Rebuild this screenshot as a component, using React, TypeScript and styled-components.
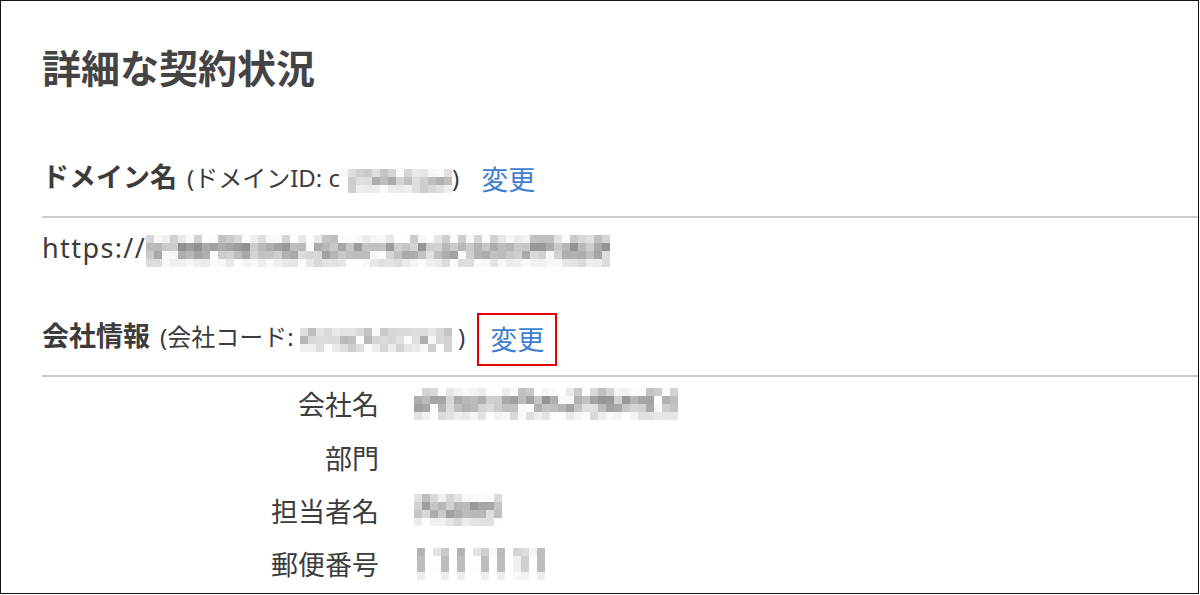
import * as React from 'react';
import styled, { createGlobalStyle } from 'styled-components';

const GlobalStyle = createGlobalStyle`
  html, body {
    margin: 0;
    padding: 0;
    background: #fff;
  }
  body {
    font-family: 'Noto Sans', 'Noto Sans CJK JP', sans-serif;
    color: #3c3c3c;
  }
`;

const Frame = styled.div`
  box-sizing: border-box;
  width: 1199px;
  height: 594px;
  border: 1px solid #111;
  padding-left: 41px;
  overflow: hidden;
`;

const Heading = styled.h1`
  margin: 0;
  padding-top: 43px;
  font-size: 39px;
  line-height: 48px;
  font-weight: 700;
  color: #444;
`;

const Section = styled.section<{ $gap: number }>`
  margin-top: ${(p) => p.$gap}px;
`;

const TitleRow = styled.div`
  line-height: 40px;
  padding-bottom: 15px;
  border-bottom: 2px solid #cdcdcd;
  white-space: nowrap;
`;

const Title = styled.span`
  font-size: 27px;
  font-weight: 700;
  color: #3c3c3c;
`;

const Sub = styled.span`
  margin-left: 10px;
  font-size: 24px;
  color: #3c3c3c;
`;

const ChangeLink = styled.a<{ $marked?: boolean }>`
  display: inline-block;
  margin-left: ${(p) => (p.$marked ? 25 : 22)}px;
  font-size: 27px;
  line-height: 27px;
  color: #3f7fcf;
  text-decoration: none;
  vertical-align: ${(p) => (p.$marked ? -4 : -3)}px;
  outline: ${(p) => (p.$marked ? '2px solid #e60000' : 'none')};
  outline-offset: 11px;
`;

const UrlLine = styled.div`
  margin-top: 10px;
  font-size: 27px;
  line-height: 40px;
  letter-spacing: 1.4px;
  white-space: nowrap;
`;

const Rows = styled.div`
  display: flex;
  flex-direction: column;
`;

const Row = styled.div`
  display: grid;
  grid-template-columns: 337px 1fr;
  column-gap: 35px;
  align-items: center;
  height: 53.4px;
`;

const Label = styled.div`
  font-size: 27px;
  text-align: right;
  color: #3c3c3c;
`;

const Value = styled.div`
  display: flex;
  align-items: center;
  font-size: 27px;
`;

const Grid = styled.span<{ $cols: number; $cell: number }>`
  display: inline-grid;
  grid-template-columns: repeat(${(p) => p.$cols}, ${(p) => p.$cell}px);
  grid-auto-rows: ${(p) => p.$cell}px;
  vertical-align: middle;
  letter-spacing: 0;
`;

const Cell = styled.span`
  display: block;
`;

// simple seeded random so the mosaic stays the same on every run
function seeded(seed: number) {
  let s = seed >>> 0;
  return () => {
    s = (s + 0x6d2b79f5) >>> 0;
    let t = s;
    t = Math.imul(t ^ (t >>> 15), t | 1);
    t ^= t + Math.imul(t ^ (t >>> 7), t | 61);
    return ((t ^ (t >>> 14)) >>> 0) / 4294967296;
  };
}

type Band = [number, number, number]; // min, max, chance of blank

const bands3: Band[] = [
  [190, 235, 0.2],
  [170, 225, 0.08],
  [205, 240, 0.2],
];

const bands4: Band[] = [
  [190, 245, 0.4],
  [140, 215, 0.08],
  [160, 225, 0.1],
  [215, 245, 0.3],
];

function Mosaic({ cols, seed, bands, cell = 8 }: { cols: number; seed: number; bands: Band[]; cell?: number }) {
  const rnd = seeded(seed);
  const cells: string[] = [];
  bands.forEach(([min, max, blank]) => {
    for (let c = 0; c < cols; c++) {
      const l = rnd() < blank ? 246 + Math.round(rnd() * 9) : Math.round(min + rnd() * (max - min));
      cells.push(`rgb(${l},${l},${l})`);
    }
  });
  return (
    <Grid $cols={cols} $cell={cell}>
      {cells.map((bg, i) => (
        <Cell key={i} style={{ background: bg }} />
      ))}
    </Grid>
  );
}

// postal code digits, column by column, top to bottom
const postal: number[][] = [
  [179, 189, 189, 236],
  [255, 255, 255, 255],
  [227, 252, 252, 255],
  [201, 189, 189, 238],
  [255, 255, 255, 255],
  [179, 189, 189, 238],
  [255, 255, 255, 255],
  [227, 252, 252, 255],
  [207, 189, 189, 239],
  [248, 255, 255, 255],
  [187, 189, 189, 238],
  [255, 255, 255, 255],
  [213, 239, 239, 248],
  [220, 207, 207, 242],
  [245, 255, 255, 255],
  [189, 189, 189, 238],
];

function PostalMosaic() {
  const cells: string[] = [];
  for (let r = 0; r < 4; r++) {
    postal.forEach((col) => cells.push(`rgb(${col[r]},${col[r]},${col[r]})`));
  }
  return (
    <Grid $cols={postal.length} $cell={8} style={{ marginLeft: 3 }}>
      {cells.map((bg, i) => (
        <Cell key={i} style={{ background: bg }} />
      ))}
    </Grid>
  );
}

export default function App() {
  return (
    <>
      <GlobalStyle />
      <Frame>
        <Heading>詳細な契約状況</Heading>

        <Section $gap={65}>
          <TitleRow>
            <Title>ドメイン名</Title>
            <Sub>
              (ドメインID: c<Mosaic cols={14} seed={7} bands={bands3} />)
            </Sub>
            <ChangeLink href="#">変更</ChangeLink>
          </TitleRow>
          <UrlLine>
            https://<Mosaic cols={58} seed={21} bands={bands4} />
          </UrlLine>
        </Section>

        <Section $gap={48}>
          <TitleRow>
            <Title>会社情報</Title>
            <Sub>
              (会社コード: <Mosaic cols={19} seed={33} bands={bands3} /> )
            </Sub>
            <ChangeLink href="#" $marked>
              変更
            </ChangeLink>
          </TitleRow>
          <Rows>
            <Row>
              <Label>会社名</Label>
              <Value>
                <Mosaic cols={33} seed={45} bands={bands4} />
              </Value>
            </Row>
            <Row>
              <Label>部門</Label>
              <Value />
            </Row>
            <Row>
              <Label>担当者名</Label>
              <Value>
                <Mosaic cols={11} seed={58} bands={bands4} />
              </Value>
            </Row>
            <Row>
              <Label>郵便番号</Label>
              <Value>
                <PostalMosaic />
              </Value>
            </Row>
          </Rows>
        </Section>
      </Frame>
    </>
  );
}
